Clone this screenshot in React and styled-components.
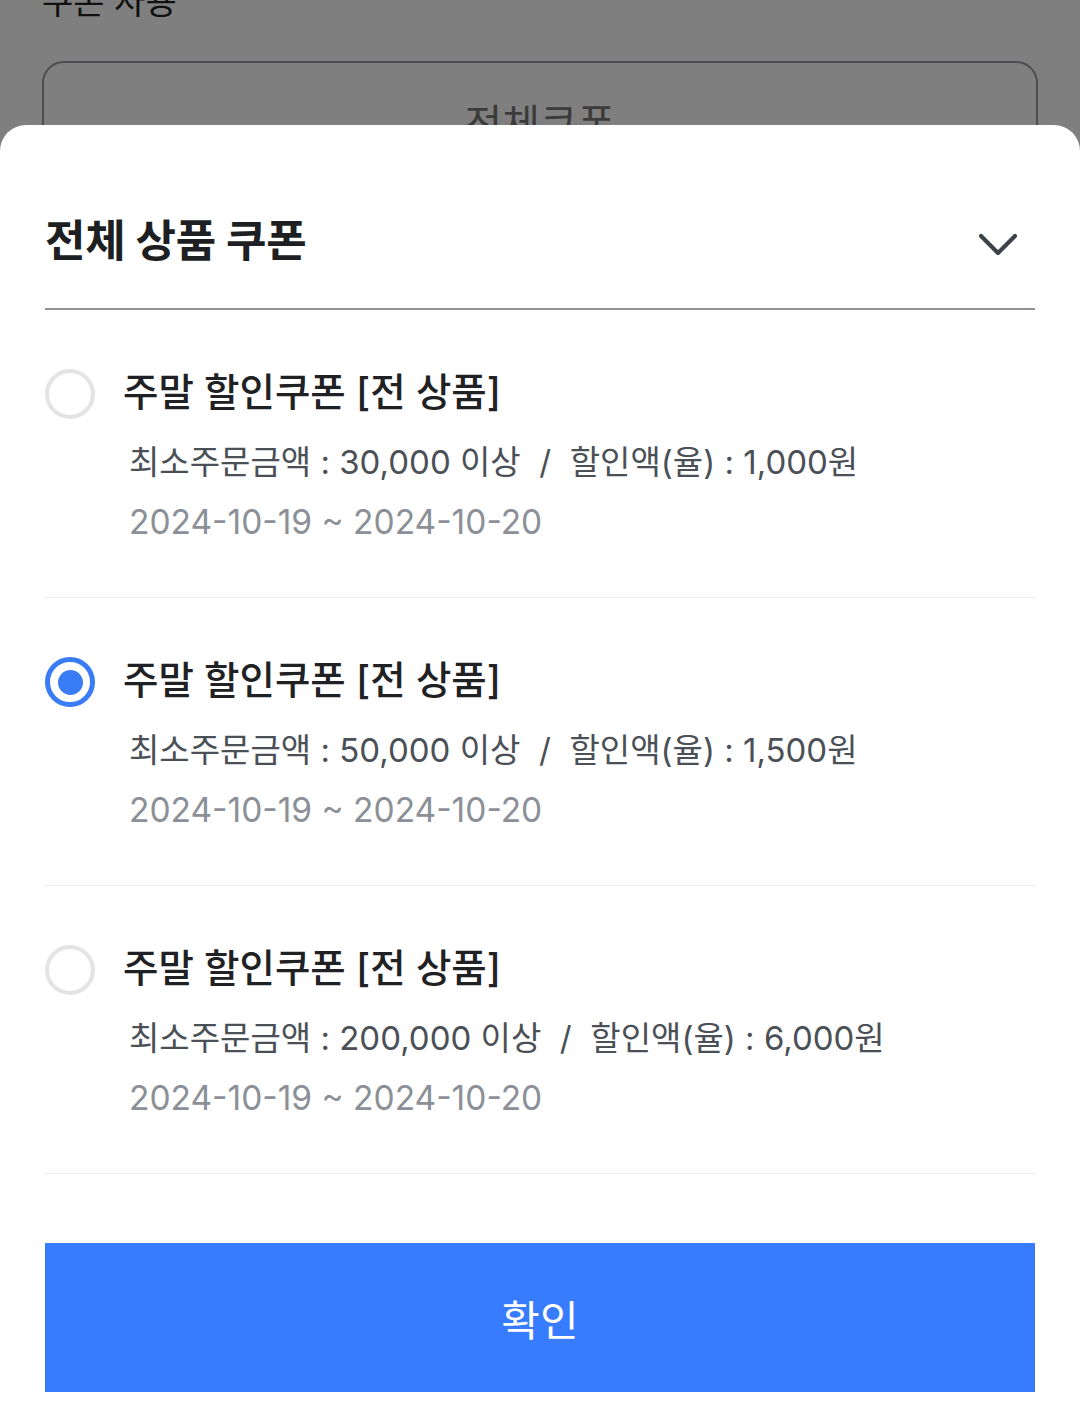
import React, { useState } from "react";
import styled, { createGlobalStyle } from "styled-components";

const GlobalStyle = createGlobalStyle`
  html, body {
    margin: 0;
    padding: 0;
    background: #ffffff;
    font-family: "Inter", "Noto Sans CJK KR", sans-serif;
    overflow: hidden;
  }
  * { box-sizing: border-box; }
`;

// ---- page behind the sheet ----------------

const Page = styled.div`
  height: 1422px;
  padding: 0 42px;
  background: #ffffff;
`;

const PageLabel = styled.div`
  margin-top: -20px;
  font-size: 34px;
  line-height: 44px;
  color: #222222;
`;

const SelectBox = styled.div`
  margin-top: 37px;
  height: 110px;
  border: 2px solid #9a9aa2;
  border-radius: 22px;
  display: flex;
  justify-content: center;
  padding-top: 28px;
  font-size: 41px;
  color: #777777;
`;

const Dim = styled.div`
  position: fixed;
  inset: 0;
  background: rgba(0, 0, 0, 0.5);
`;

// ---- bottom sheet ----------------

const Sheet = styled.div`
  position: fixed;
  left: 0;
  right: 0;
  bottom: 0;
  background: #ffffff;
  border-radius: 26px 26px 0 0;
  padding: 0 45px 30px;
`;

const Header = styled.div`
  display: flex;
  align-items: center;
  justify-content: space-between;
  padding: 90px 0 41px;
  border-bottom: 2px solid #8f9399;
`;

const HeaderTitle = styled.h2`
  margin: 0;
  font-size: 44px;
  line-height: 52px;
  font-weight: 700;
  color: #1d1f22;
  letter-spacing: -0.3px;
`;

const Chevron = styled.svg`
  width: 40px;
  height: 24px;
  margin-right: 17px;
  margin-top: 6px;
`;

const Item = styled.label`
  display: flex;
  gap: 28px;
  padding: 56px 0 53px;
  border-bottom: 1px solid #ececee;
  cursor: pointer;
`;

const Radio = styled.span`
  flex: none;
  width: 50px;
  height: 50px;
  margin-top: 3px;
  border-radius: 50%;
  border: ${(p) => (p.$on ? "5px solid #3a7cf6" : "4px solid #e4e4e6")};
  display: flex;
  align-items: center;
  justify-content: center;

  &::after {
    content: "";
    width: 25px;
    height: 25px;
    border-radius: 50%;
    background: #3a7cf6;
    display: ${(p) => (p.$on ? "block" : "none")};
  }
`;

const Body = styled.div`
  display: flex;
  flex-direction: column;
`;

const Title = styled.div`
  font-size: 38.5px;
  line-height: 52px;
  font-weight: 500;
  color: #1f2124;
`;

const Detail = styled.div`
  margin-top: 22px;
  padding-left: 6px;
  font-size: 33px;
  line-height: 44px;
  color: #4b5057;
  white-space: pre;
`;

const Period = styled.div`
  margin-top: 16px;
  padding-left: 6px;
  font-size: 33.5px;
  line-height: 44px;
  color: #8b9097;
`;

const Confirm = styled.button`
  display: block;
  width: 100%;
  height: 149px;
  margin-top: 69px;
  border: 0;
  border-radius: 0;
  background: #377bff;
  color: #ffffff;
  font-family: inherit;
  font-size: 42px;
  font-weight: 400;
  cursor: pointer;
`;

const coupons = [
  { id: 1, min: "30,000", amount: "1,000원" },
  { id: 2, min: "50,000", amount: "1,500원" },
  { id: 3, min: "200,000", amount: "6,000원" },
];

const App = () => {
  const [picked, setPicked] = useState(2);
  return (
    <>
      <GlobalStyle />
      <Page>
        <PageLabel>쿠폰 사용</PageLabel>
        <SelectBox>전체쿠폰</SelectBox>
      </Page>
      <Dim />
      <Sheet>
        <Header>
          <HeaderTitle>전체 상품 쿠폰</HeaderTitle>
          <Chevron viewBox="0 0 40 24" fill="none">
            <polyline points="3,4 20,21 37,4" stroke="#3d4248" strokeWidth="4.2" strokeLinecap="round" strokeLinejoin="round" />
          </Chevron>
        </Header>
        {coupons.map((c) => (
          <Item key={c.id} onClick={() => setPicked(c.id)}>
            <Radio $on={picked === c.id} />
            <Body>
              <Title>주말 할인쿠폰 [전 상품]</Title>
              <Detail>{`최소주문금액 : ${c.min} 이상  /  할인액(율) : ${c.amount}`}</Detail>
              <Period>2024-10-19 ~ 2024-10-20</Period>
            </Body>
          </Item>
        ))}
        <Confirm>확인</Confirm>
      </Sheet>
    </>
  );
};

export default App;
